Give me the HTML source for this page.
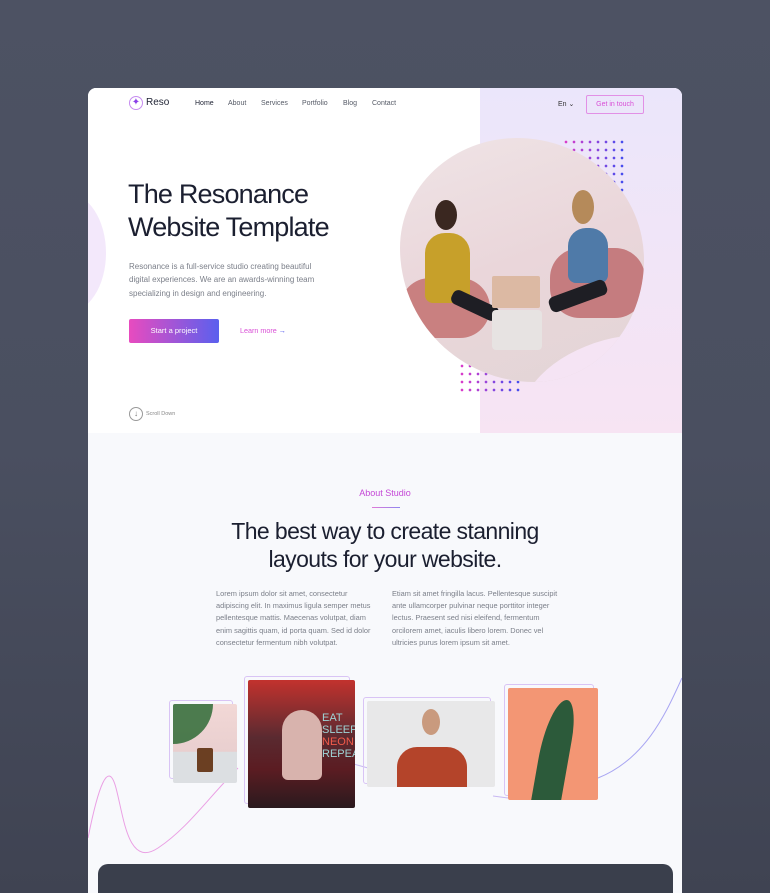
<!DOCTYPE html>
<html><head><meta charset="utf-8"><style>
*{margin:0;padding:0;box-sizing:border-box}
html,body{width:770px;height:893px;overflow:hidden}
body{background:linear-gradient(180deg,#4d5263 0%,#4a4f60 50%,#3f4352 100%);font-family:"Liberation Sans",sans-serif;position:relative}
.card{position:absolute;left:88px;top:88px;width:594px;height:805px;background:#f8f9fc;border-radius:8px 8px 0 0;overflow:hidden}
.hero{position:absolute;left:0;top:0;width:594px;height:345px;background:#fff}
.rp{position:absolute;left:392px;top:0;width:202px;height:345px;background:linear-gradient(180deg,#ebe6fb,#f7e4f3)}
.abs{position:absolute}
.nav a{position:absolute;top:12px;font-size:7px;color:#555a66}
.dots{position:absolute;background:linear-gradient(90deg,#e23bc8,#3f4ef0);-webkit-mask-image:radial-gradient(circle at 4px 4px,#000 1.2px,transparent 1.5px);-webkit-mask-size:8px 8px;mask-image:radial-gradient(circle at 4px 4px,#000 1.2px,transparent 1.5px);mask-size:8px 8px}
.txt{font-size:7.2px;color:#7b7f89;line-height:13.6px}
.ph{position:absolute;border-radius:2px;overflow:hidden}
.fr{position:absolute;border:1.5px solid #d9c4f5;border-radius:3px}
</style></head><body>
<div class="card">
<div class="hero"></div>
<div class="rp"></div>
<div class="abs" style="left:-60px;top:105px;width:78px;height:120px;border-radius:50%;background:#f3e8fb"></div>
<div class="abs" style="left:41px;top:8px;width:14px;height:14px;border:1.5px solid #c68cf0;border-radius:50%;color:#8b3fe8;font-size:10px;line-height:11px;text-align:center">✦</div>
<div class="abs" style="left:58px;top:9px;font-size:10px;color:#1e2233">Reso</div>
<div class="nav">
<a style="left:107px;color:#1e2233">Home</a><a style="left:140px">About</a><a style="left:173px">Services</a><a style="left:214px">Portfolio</a><a style="left:255px">Blog</a><a style="left:284px">Contact</a>
<a style="left:470px;color:#333">En ⌄</a>
</div>
<div class="abs" style="left:498px;top:7px;width:58px;height:19px;border:1px solid #e290e6;border-radius:2px;font-size:7px;color:#d94fd6;text-align:center;line-height:17px">Get in touch</div>
<div class="abs" style="left:40px;top:90px;font-size:27px;line-height:33px;color:#1b1f30;letter-spacing:-0.8px">The Resonance<br>Website Template</div>
<div class="abs txt" style="left:41px;top:172px;width:192px;font-size:8px;line-height:13.4px">Resonance is a full-service studio creating beautiful digital experiences. We are an awards-winning team specializing in design and engineering.</div>
<div class="abs" style="left:41px;top:231px;width:90px;height:24px;border-radius:2px;background:linear-gradient(90deg,#e84bbf,#5a60ee);color:#fff;font-size:7.5px;text-align:center;line-height:24px">Start a project</div>
<div class="abs" style="left:152px;top:238px;font-size:7.2px;color:#d94fd6">Learn more <span style="color:#5a60ee">→</span></div>
<div class="abs" style="left:41px;top:319px;width:14px;height:14px;border:1px solid #999;border-radius:50%;font-size:8px;line-height:12px;text-align:center;color:#777">↓</div>
<div class="abs" style="left:58px;top:323px;font-size:5.5px;color:#888">Scroll Down</div>
<div class="dots" style="left:474px;top:50px;width:64px;height:56px"></div>
<div class="dots" style="left:370px;top:250px;width:64px;height:56px"></div>
<div class="abs" style="left:312px;top:50px;width:244px;height:244px;border-radius:48% 52% 45% 55% / 45% 50% 50% 55%;overflow:hidden;background:linear-gradient(160deg,#efe4e6,#ead6da 50%,#e2d5d6)">
 <div class="abs" style="left:0;top:140px;width:90px;height:60px;background:#c98080;border-radius:30px"></div>
 <div class="abs" style="left:25px;top:95px;width:45px;height:70px;background:#c7a02a;border-radius:20px 20px 8px 8px"></div>
 <div class="abs" style="left:35px;top:62px;width:22px;height:30px;background:#3a2720;border-radius:50%"></div>
 <div class="abs" style="left:50px;top:160px;width:50px;height:15px;background:#1e1e24;border-radius:6px;transform:rotate(25deg)"></div>
 <div class="abs" style="left:150px;top:110px;width:95px;height:70px;background:#c57c7f;border-radius:30px"></div>
 <div class="abs" style="left:168px;top:90px;width:40px;height:55px;background:#4f7aa8;border-radius:18px 18px 8px 8px"></div>
 <div class="abs" style="left:172px;top:52px;width:22px;height:34px;background:#b58a5a;border-radius:50%"></div>
 <div class="abs" style="left:148px;top:150px;width:60px;height:16px;background:#1e1e24;border-radius:6px;transform:rotate(-20deg)"></div>
 <div class="abs" style="left:92px;top:138px;width:48px;height:32px;background:#dcb9a3;border-radius:2px"></div>
 <div class="abs" style="left:92px;top:172px;width:50px;height:40px;background:#e7e3e2;border-radius:4px"></div>
 <div class="abs" style="left:120px;top:200px;width:200px;height:120px;background:#f5e4f4;border-radius:50%;transform:rotate(-15deg)"></div>
</div>
<div class="abs" style="left:0;top:400px;width:594px;text-align:center;font-size:9px;color:#c448d6">About Studio</div>
<div class="abs" style="left:284px;top:419px;width:28px;height:1px;background:linear-gradient(90deg,#e07ad8,#8f86ef)"></div>
<div class="abs" style="left:0;top:429px;width:594px;text-align:center;font-size:23px;line-height:28px;color:#1b1f30;letter-spacing:-0.6px">The best way to create stanning<br>layouts for your website.</div>
<div class="abs txt" style="left:128px;top:500px;width:162px;font-size:7.4px;line-height:12.2px">Lorem ipsum dolor sit amet, consectetur adipiscing elit. In maximus ligula semper metus pellentesque mattis. Maecenas volutpat, diam enim sagittis quam, id porta quam. Sed id dolor consectetur fermentum nibh volutpat.</div>
<div class="abs txt" style="left:304px;top:500px;width:168px;font-size:7.4px;line-height:12.2px">Etiam sit amet fringilla lacus. Pellentesque suscipit ante ullamcorper pulvinar neque porttitor integer lectus. Praesent sed nisi eleifend, fermentum orcilorem amet, iaculis libero lorem. Donec vel ultricies purus lorem ipsum sit amet.</div>
<svg class="abs" style="left:0;top:580px" width="594" height="200"><path d="M0 170 C10 120 20 90 28 120 S40 200 70 180 S120 130 150 100" fill="none" stroke="#eaa0e4" stroke-width="1"/><path d="M510 110 C560 90 580 40 594 10" fill="none" stroke="#a9a6f2" stroke-width="1"/><path d="M262 95 L280 100 M405 128 L420 130" stroke="#c8b8f2" stroke-width="1"/></svg>
<div class="fr" style="left:81px;top:612px;width:64px;height:79px"></div>
<div class="ph" style="left:85px;top:616px;width:64px;height:79px;background:linear-gradient(180deg,#f2d8d6 0%,#e9cfcf 60%,#dcdfe2 61%)"><div class="abs" style="left:0;top:0;width:40px;height:40px;background:#2f6b36;border-radius:0 0 40px 0;opacity:.85"></div><div class="abs" style="left:24px;top:44px;width:16px;height:24px;background:#6b3f22;border-radius:2px"></div></div>
<div class="fr" style="left:156px;top:588px;width:106px;height:128px"></div>
<div class="ph" style="left:160px;top:592px;width:107px;height:128px;background:linear-gradient(180deg,#c2322e 0%,#5a2a30 45%,#5b1c22 70%,#2a1a1e)"><div class="abs" style="left:34px;top:30px;width:40px;height:70px;background:#d8b3ad;border-radius:20px 20px 6px 6px"></div><div class="abs" style="left:74px;top:32px;color:#9fd4d6;font-size:11px;line-height:12px">EAT<br>SLEEP<br><span style="color:#f15a4a">NEON</span><br>REPEA</div></div>
<div class="fr" style="left:275px;top:609px;width:128px;height:87px"></div>
<div class="ph" style="left:279px;top:613px;width:128px;height:86px;background:#e8e8e9"><div class="abs" style="left:30px;top:46px;width:70px;height:40px;background:#b4442a;border-radius:20px 20px 0 0"></div><div class="abs" style="left:55px;top:8px;width:18px;height:26px;background:#c99a7e;border-radius:50%"></div></div>
<div class="fr" style="left:416px;top:596px;width:90px;height:112px"></div>
<div class="ph" style="left:420px;top:600px;width:90px;height:112px;background:#f39674"><div class="abs" style="left:32px;top:12px;width:30px;height:100px;background:#2c5a3a;border-radius:60% 40% 0 0;transform:skewX(-10deg)"></div></div>
<div class="abs" style="left:10px;top:776px;width:575px;height:60px;background:#3a3f4c;border-radius:10px"></div>
</div>
</body></html>
